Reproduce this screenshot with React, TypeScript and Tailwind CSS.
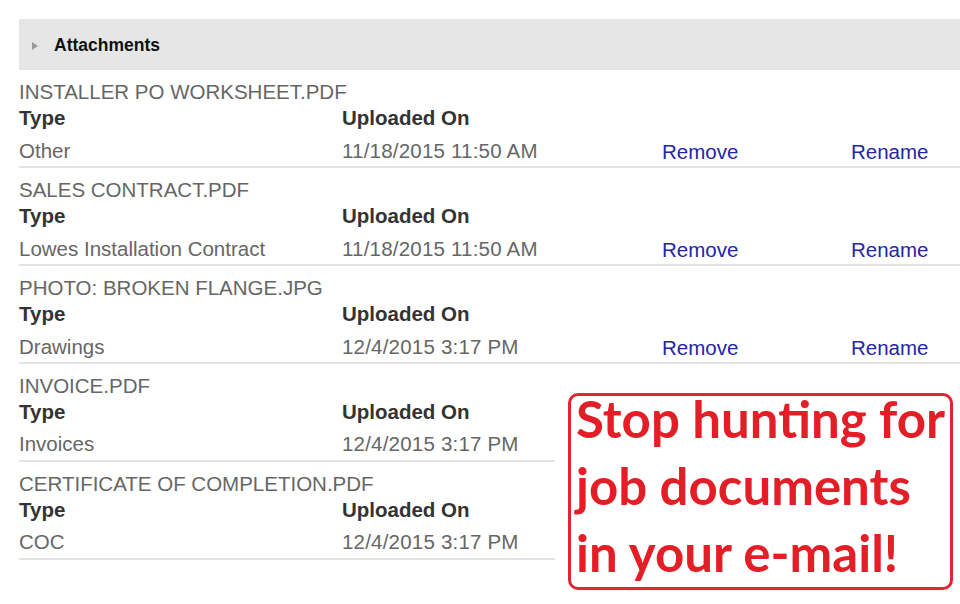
const files = [
  { name: "INSTALLER PO WORKSHEET.PDF", type: "Other", uploaded: "11/18/2015 11:50 AM", actions: true },
  { name: "SALES CONTRACT.PDF", type: "Lowes Installation Contract", uploaded: "11/18/2015 11:50 AM", actions: true },
  { name: "PHOTO: BROKEN FLANGE.JPG", type: "Drawings", uploaded: "12/4/2015 3:17 PM", actions: true },
  { name: "INVOICE.PDF", type: "Invoices", uploaded: "12/4/2015 3:17 PM", actions: false },
  { name: "CERTIFICATE OF COMPLETION.PDF", type: "COC", uploaded: "12/4/2015 3:17 PM", actions: false },
];

type FileRow = (typeof files)[number];

function AttachmentRow({ file }: { file: FileRow }) {
  return (
    <li className="flex flex-col pt-[10px] pb-[4px] border-b-2 border-[#e2e2e2]">
      <span className="h-[24px] leading-[24px] text-[20.5px] text-[#666]">{file.name}</span>
      <div className="grid grid-cols-[323px_320px_189px_1fr] mt-[2px]">
        <span className="h-[24px] leading-[24px] text-[20.5px] font-bold text-[#333]">Type</span>
        <span className="h-[24px] leading-[24px] text-[20.5px] font-bold text-[#333]">Uploaded On</span>
        <span />
        <span />
      </div>
      <div className="grid grid-cols-[323px_320px_189px_1fr] mt-[8px] h-[24px] items-center">
        <span className="leading-[24px] text-[20.5px] text-[#666]">{file.type}</span>
        <span className="leading-[24px] text-[20.5px] text-[#666] tracking-[0.2px]">{file.uploaded}</span>
        {file.actions ? (
          <>
            <a className="leading-[24px] text-[20.5px] text-[#2525a6] mt-[2px] cursor-pointer">Remove</a>
            <a className="leading-[24px] text-[20.5px] text-[#2525a6] mt-[1px] cursor-pointer">Rename</a>
          </>
        ) : (
          <>
            <span />
            <span />
          </>
        )}
      </div>
    </li>
  );
}

export default function App() {
  return (
    <div
      className="relative w-[960px] h-[604px] bg-white overflow-hidden pt-[19px] pl-[19px]"
      style={{ fontFamily: '"Liberation Sans", Arial, sans-serif' }}
    >
      {/* collapsible header */}
      <div className="flex items-center h-[51px] pt-[2px] bg-[#e6e6e6]">
        <svg width="6" height="8" viewBox="0 0 6 8" className="ml-[13px]">
          <path d="M0 0 L6 4 L0 8 Z" fill="#999" />
        </svg>
        <span className="ml-[16px] text-[17.5px] font-bold text-[#111]">Attachments</span>
      </div>

      {/* file list */}
      <ul className="flex flex-col">
        {files.map((f) => (
          <AttachmentRow key={f.name} file={f} />
        ))}
      </ul>

      {/* promo callout */}
      <div className="absolute left-[555px] top-[372px] right-0 bottom-0 bg-white">
        <div
          className="absolute left-[13px] top-[21px] w-[385px] h-[197px] border-[3px] border-[#e02631] rounded-[10px] pl-[5px]"
          style={{ fontFamily: 'Lato, "Open Sans", sans-serif' }}
        >
          <div className="flex flex-col gap-[22px] text-[51px] font-bold leading-[45px] text-[#e31e26] whitespace-nowrap">
            <span>Stop hunting for</span>
            <span>job documents</span>
            <span>in your e-mail!</span>
          </div>
        </div>
      </div>
    </div>
  );
}
